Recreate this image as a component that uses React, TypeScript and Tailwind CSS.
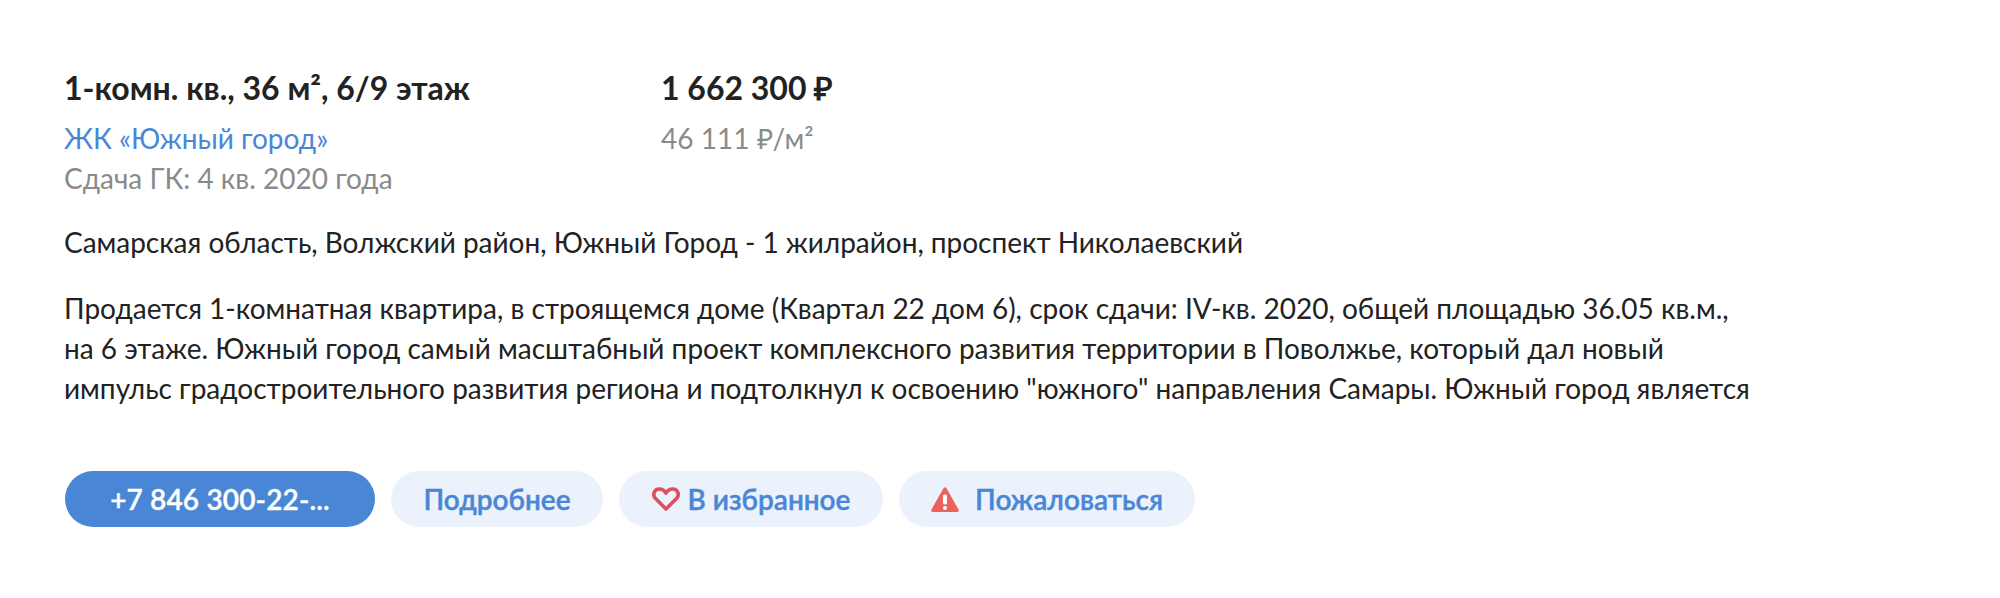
export default function App() {
  return (
    <div className="h-[598px] w-[2000px] bg-white pl-[64px] pt-[67px] font-['Lato',sans-serif] text-[#222]">
      <div className="flex">
        <div className="w-[597px]">
          <h2 className="text-[32px] leading-[42px] font-bold text-[#222]">
            1-комн. кв., 36 м², 6/9 этаж
          </h2>
          <a className="mt-[12px] block text-[28px] leading-[34px] text-[#4a86d6]">
            ЖК «Южный город»
          </a>
          <p className="mt-[6px] text-[28px] leading-[34px] text-[#8a8a8a]">
            Сдача ГК: 4 кв. 2020 года
          </p>
        </div>
        <div>
          <p className="text-[32px] leading-[42px] font-bold text-[#222]">1 662 300 ₽</p>
          <p className="mt-[12px] text-[28px] leading-[34px] text-[#8a8a8a]">46 111 ₽/м²</p>
        </div>
      </div>

      <p className="mt-[29px] text-[28px] leading-[36px] tracking-[-0.03px]">
        Самарская область, Волжский район, Южный Город - 1 жилрайон, проспект Николаевский
      </p>

      <p className="mt-[28px] w-[1800px] text-[28px] leading-[40px]">
        Продается 1-комнатная квартира, в строящемся доме (Квартал 22 дом 6), срок сдачи: IV-кв. 2020, общей площадью 36.05 кв.м.,
        <br />
        на 6 этаже. Южный город самый масштабный проект комплексного развития территории в Поволжье, который дал новый
        <br />
        импульс градостроительного развития региона и подтолкнул к освоению "южного" направления Самары. Южный город является
      </p>

      <div className="mt-[63px] ml-px flex gap-4 text-[28px] font-semibold [-webkit-text-stroke:0.4px]">
        <button className="flex h-[56px] w-[310px] items-center justify-center rounded-full bg-[#4a86d6] tracking-[0.15px] text-white">
          +7 846 300-22-...
        </button>
        <button className="flex h-[56px] w-[212px] items-center justify-center rounded-full bg-[#ebf2fb] text-[#4a86d6]">
          Подробнее
        </button>
        <button className="flex h-[56px] w-[264px] items-center justify-center gap-[8px] rounded-full bg-[#ebf2fb] text-[#4a86d6]">
          <svg viewBox="0 0 28 24" className="h-[24px] w-[28px]" fill="none" stroke="#dc5060" strokeWidth="3.6" strokeLinejoin="round">
            <path d="M14 22 3.5 11.5C.5 8.5 1.5 2 7.5 2c3 0 5 1.5 6.5 4 1.5-2.500 3.500-4 6.500-4 6 0 7 6.500 4 9.500Z" />
          </svg>
          В избранное
        </button>
        <button className="flex h-[56px] w-[296px] items-center justify-center gap-[16px] rounded-full bg-[#ebf2fb] text-[#4a86d6]">
          <svg viewBox="0 0 28 25" className="h-[25px] w-[28px]">
            <path d="M12.600 1Q14-.5 15.400 1L27.500 22.500Q28.500 25 26 25H2Q-.5 25 .5 22.500Z" fill="#ec625c" />
            <rect x="12" y="7.500" width="4" height="10" rx="1.500" fill="#fff" />
            <circle cx="14" cy="21" r="2" fill="#fff" />
          </svg>
          Пожаловаться
        </button>
      </div>
    </div>
  );
}
